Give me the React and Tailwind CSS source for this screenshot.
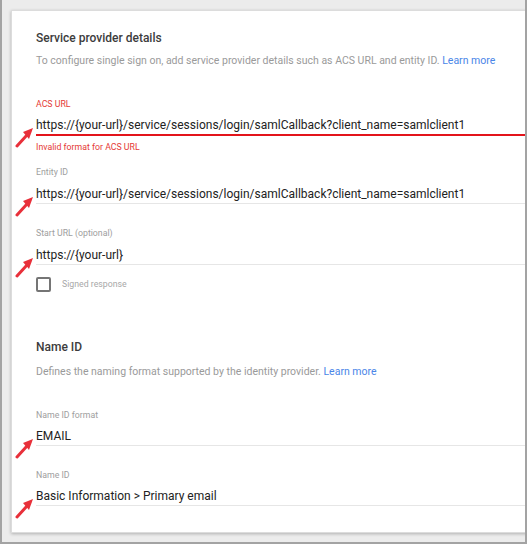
import React from 'react';

const FONT = { fontFamily: 'Roboto, "Liberation Sans", sans-serif' };

const Arrow = () => (
  <svg width="20" height="22" viewBox="0 0 20 22" className="absolute left-[-21px] top-[9px]">
    <path d="M2 20 L12 9" stroke="#e8303a" strokeWidth="3" strokeLinecap="round" />
    <polygon points="18,2 8,6 14,13" fill="#e8303a" />
  </svg>
);

const Field = ({ label, value, error, gap = 'mt-[8px]', className = '' }) => (
  <div className={`relative ${className}`}>
    <div className={`text-[8.75px] leading-[12px] ${error ? 'text-[#e53935]' : 'text-[#9e9e9e]'}`}>{label}</div>
    <div className={`relative ${gap}`}>
      <Arrow />
      <div className="text-[12px] leading-[16px] text-[#222]">{value}</div>
    </div>
    <div className={`${error ? 'mt-px h-[2px] bg-[#e3141b]' : 'mt-px h-px bg-[#e6e6e6]'}`} />
    {error && (
      <div className="mt-[5px] text-[8.75px] leading-[12px] text-[#e53935]">{error}</div>
    )}
  </div>
);

export default function App() {
  return (
    <div style={FONT} className="w-[527px] h-[544px] overflow-hidden bg-[#ececec] border-x-2 border-b-2 border-[#a3a3a3]">
      <div className="ml-[9px] mt-[10px] w-[540px] h-[523px] bg-white border border-[#dcdcdc] shadow-[0_1px_3px_rgba(0,0,0,0.25)] pl-[24px] pt-[18px]">
        <div className="text-[12px] leading-[18px] font-medium text-[#3c3c3c]">Service provider details</div>
        <div className="mt-[6px] text-[10.5px] leading-[16px] text-[#9a9a9a]">
          To configure single sign on, add service provider details such as ACS URL and entity ID.{' '}
          <span className="text-[#4a86e8]">Learn more</span>
        </div>

        <Field
          className="mt-[29px]"
          gap="mt-[7px]"
          label="ACS URL"
          value="https://{your-url}/service/sessions/login/samlCallback?client_name=samlclient1"
          error="Invalid format for ACS URL"
        />
        <Field
          className="mt-[13px]"
          label="Entity ID"
          value="https://{your-url}/service/sessions/login/samlCallback?client_name=samlclient1"
        />
        <Field className="mt-[23px]" label="Start URL (optional)" value="https://{your-url}" />

        <div className="mt-[12px] flex items-center gap-[11px]">
          <div className="w-[15px] h-[15px] border-2 border-[#757575] rounded-[2px]" />
          <span className="text-[8.75px] text-[#a8a8a8]">Signed response</span>
        </div>

        <div className="mt-[46px] text-[12px] leading-[18px] font-medium text-[#3c3c3c]">Name ID</div>
        <div className="mt-[8px] text-[10.5px] leading-[16px] text-[#9a9a9a]">
          Defines the naming format supported by the identity provider.{' '}
          <span className="text-[#4a86e8]">Learn more</span>
        </div>

        <Field className="mt-[29px]" gap="mt-[7px]" label="Name ID format" value="EMAIL" />
        <Field className="mt-[23px]" gap="mt-[7px]" label="Name ID" value="Basic Information > Primary email" />
      </div>
    </div>
  );
}
